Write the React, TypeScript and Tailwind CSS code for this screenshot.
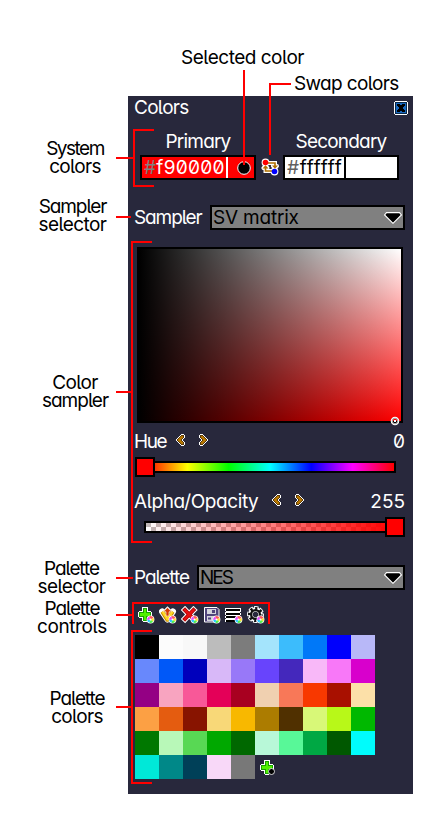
import type { ReactNode } from "react";

const palette = [
  "#000000", "#fcfcfc", "#f8f8f8", "#bcbcbc", "#7c7c7c", "#a4e4fc", "#3cbcfc", "#0078f8", "#0000fc", "#b8b8f8",
  "#6888fc", "#0058f8", "#0000bc", "#d8b8f8", "#9878f8", "#6844fc", "#4428bc", "#f8b8f8", "#f878f8", "#d800cc",
  "#940084", "#f8a4c0", "#f85898", "#e40058", "#a80020", "#f0d0b0", "#f87858", "#f83800", "#a81000", "#fce0a8",
  "#fca044", "#e45c10", "#881400", "#f8d878", "#f8b800", "#ac7c00", "#503000", "#d8f878", "#b8f818", "#00b800",
  "#007800", "#b8f8b8", "#58d854", "#00a800", "#006800", "#b8f8d8", "#58f898", "#00a844", "#005800", "#00fcfc",
  "#00e8d8", "#008888", "#004058", "#f8d8f8", "#787878",
];

function Wheel() {
  return (
    <g>
      <circle cx="13.5" cy="13.5" r="3.9" fill="#fff" />
      <path d="M13.5 13.500L12 10.400A3.300 3.300 0 0 1 16.500 12z" fill="#ff5a5a" />
      <path d="M13.5 13.500L16.500 12A3.300 3.300 0 0 1 16 15.700z" fill="#ffe030" />
      <path d="M13.5 13.500L16 15.700A3.300 3.300 0 0 1 12.500 16.700z" fill="#50f050" />
      <path d="M13.5 13.500L12.500 16.700A3.300 3.300 0 0 1 10.200 14z" fill="#28c8ff" />
      <path d="M13.5 13.500L10.200 14A3.300 3.300 0 0 1 12 10.400z" fill="#e048ff" />
      <circle cx="13.5" cy="13.5" r="1" fill="#fff" />
    </g>
  );
}

function Icon({ children, className = "" }: { children: ReactNode; className?: string }) {
  return (
    <svg viewBox="0 0 18 18" width="18" height="18" fill="none" className={className}>
      {children}
    </svg>
  );
}

function Plus() {
  return (
    <g shapeRendering="crispEdges">
      <path d="M5 1h6v1h0v3h3v1h1v5h-1v1h-3v3h-1v1h-4v-1h-1v-3h-3v-1h-1v-5h1v-1h3z" fill="#fff" />
      <path d="M6 2h4v4h4v5h-4v4h-4v-4h-4v-5h4z" fill="#18a000" />
      <path d="M7 3h2v4h4v3h-4v4h-2v-4h-4v-3h4z" fill="#50f000" />
    </g>
  );
}

function ChevronLeft() {
  return (
    <svg viewBox="0 0 10 12" width="10" height="12" shapeRendering="crispEdges">
      <path d="M5 0h3v1h1v3h-1v1h-1v2h1v1h1v3h-1v1h-3v-1h-1v-1h-1v-1h-1v-1h-1v-1h-1v-2h1v-1h1v-1h1v-1h1v-1h1z" fill="#fff" />
      <path d="M5 1h3v3h-1v1h-1v2h1v1h1v3h-3v-1h-1v-1h-1v-1h-1v-1h-1v-2h1v-1h1v-1h1v-1h1z" fill="#5a3a08" />
      <path d="M5 2h2v2h-1v1h-1v2h1v1h1v2h-2v-1h-1v-1h-1v-1h-1v-2h1v-1h1v-1h1z" fill="#b87800" />
    </svg>
  );
}

function Steppers() {
  return (
    <div className="mb-[4px] flex gap-[12px]">
      <ChevronLeft />
      <div className="-scale-x-100"><ChevronLeft /></div>
    </div>
  );
}

function Select({ children }: { children: ReactNode }) {
  return (
    <div className="flex h-[25px] flex-1 items-center justify-between border-2 border-black bg-[#808080] px-[1px] text-black">
      {children}
      <svg viewBox="0 0 18 12" width="18" height="12">
        <path d="M2.500 .6h13L17.400 3 9 11.300.6 3z" fill="#000" stroke="#fff" strokeWidth="1.100" />
      </svg>
    </div>
  );
}

function Label({ children, className }: { children: ReactNode; className: string }) {
  return <div className={`flex h-[36px] flex-col items-center leading-[18px] ${className}`}>{children}</div>;
}

function Annotations() {
  return (
    <svg viewBox="0 0 445 826" width="445" height="826" shapeRendering="crispEdges" className="pointer-events-none absolute top-0 left-0" fill="none" stroke="#ff0000" strokeWidth="2">
      <path d="M244 70V165M291 84H270V155" />
      <path d="M154 130H134V186H154M116 158H134" />
      <path d="M116 217H131" />
      <path d="M152 242H132V542H152M116 392H132" />
      <path d="M116 578H133" />
      <path d="M133 624V603H269V624M116 615H133" />
      <path d="M152 631H132V783H152M116 707H132" />
    </svg>
  );
}

function Panel() {
  return (
    <div className="h-[698px] w-[285px] bg-[#28283c] text-white">
      <div className="flex h-[23px] items-center justify-between pr-[5px] pl-[6px]">
        <span className="tracking-[-0.7px]">Colors</span>
        <svg viewBox="0 0 14 14" width="14" height="14" shapeRendering="crispEdges">
          <path d="M1 0h12v1h1v12h-1v1h-12v-1h-1v-12h1z" fill="#fff" />
          <path d="M1 1h12v12h-12z" fill="#082848" />
          <path d="M2 2h10v10h-10z" fill="#1868c0" />
          <path d="M3 3h3v1h2v-1h3v2h-1v1h-1v2h1v1h1v2h-3v-1h-2v1h-3v-2h1v-1h1v-2h-1v-1h-1z" fill="#000" />
        </svg>
      </div>

      <div className="mt-[13px] flex h-[48px] items-end pl-[12px]">
        <div className="flex w-[116px] flex-col items-center">
          <span className="-mt-[1px] h-[27px] leading-[27px] tracking-[-0.8px]">Primary</span>
          <div className="flex h-[25px] w-full items-center border-2 border-black bg-[#ff0000] pl-[2px]">
            <span className="w-[82px] tracking-[0.3px]"><span className="text-[#808080]">#</span>f90000</span>
            <div className="h-[21px] w-[2px] bg-white" />
            <svg viewBox="0 0 14 14" width="14" height="14" className="ml-[9px]">
              <circle cx="7" cy="7" r="6.3" fill="#000" stroke="#fff" />
            </svg>
          </div>
        </div>
        <Icon className="mr-[4px] mb-[4px] ml-[5px] shrink-0">
          <g stroke="#fff" strokeWidth="4">
            <path d="M7 5h7v3M11 13H4.500v-3" />
            <path d="M12 8h4l-2 2zM2.500 10h4l-2-2z" strokeLinejoin="round" />
          </g>
          <circle cx="4.500" cy="4.500" r="3.900" fill="#fff" />
          <circle cx="13.500" cy="13.500" r="3.900" fill="#fff" />
          <path d="M7 5h7v3M11 13H4.500v-3" stroke="#b07000" strokeWidth="1.600" />
          <path d="M11 7.500h6l-3 3.200zM1.500 10.500h6l-3-3.200z" fill="#b07000" />
          <circle cx="4.500" cy="4.500" r="2.800" fill="#ff0000" />
          <circle cx="13.500" cy="13.500" r="2.800" fill="#0000ff" />
        </Icon>
        <div className="flex w-[116px] flex-col items-center">
          <span className="-mt-[1px] h-[27px] leading-[27px] tracking-[-0.8px]">Secondary</span>
          <div className="flex h-[25px] w-full items-center border-2 border-black bg-white pl-[2px] text-black">
            <span className="w-[57px] tracking-[0.7px]"><span className="text-[#606060]">#</span>ffffff</span>
            <div className="h-[21px] w-[2px] bg-black" />
          </div>
        </div>
      </div>

      <div className="mt-[25px] flex h-[25px] items-center pr-[8px] pl-[6px]">
        <span className="w-[76px] tracking-[-1.1px]">Sampler</span>
        <Select><span className="tracking-[-0.2px]">SV matrix</span></Select>
      </div>

      <div className="relative mt-[17px] ml-[9px] h-[176px] w-[266px] border-2 border-black bg-[linear-gradient(to_right,#000,transparent),linear-gradient(to_bottom,#fff,#f00)]">
        <svg viewBox="0 0 10 10" width="10" height="10" className="absolute right-[1px] -bottom-[5px]">
          <circle cx="5" cy="5" r="3.300" fill="none" stroke="#fff" strokeWidth="2" />
          <circle cx="5" cy="5" r="2.800" fill="none" stroke="#777" strokeWidth=".7" />
          <rect x="4" y="4" width="2" height="2" fill="#fff" />
        </svg>
      </div>

      <div className="mt-[7px] flex h-[24px] items-center pr-[8px] pl-[6px]">
        <span className="w-[42px] tracking-[-1.4px]">Hue</span>
        <Steppers />
        <span className="ml-auto">0</span>
      </div>
      <div className="relative mt-[7px] ml-[16px] h-[12px] w-[252px] border-2 border-black bg-[linear-gradient(to_right,#f00,#ff0,#0f0,#0ff,#00f,#f0f,#f00)]">
        <div className="absolute -top-[6px] -left-[11px] h-[20px] w-[20px] border-2 border-black bg-[#ff0000]" />
      </div>
      <div className="mt-[17px] flex h-[24px] items-center pr-[8px] pl-[6px]">
        <span className="w-[138px] tracking-[-0.4px]">Alpha/Opacity</span>
        <Steppers />
        <span className="ml-auto">255</span>
      </div>
      <div className="relative mt-[7px] ml-[16px] h-[12px] w-[252px] border-2 border-black bg-[linear-gradient(to_right,transparent,#f00),repeating-conic-gradient(#fff_0_25%,#c0b8b8_0_50%)] bg-[length:100%_100%,10px_8px]">
        <div className="absolute -top-[6px] -right-[11px] h-[20px] w-[20px] border-2 border-black bg-[#ff0000]" />
      </div>

      <div className="mt-[32px] flex h-[25px] items-center pr-[8px] pl-[6px]">
        <span className="w-[63px] tracking-[-1.1px]">Palette</span>
        <Select><span className="tracking-[-2px]">NES</span></Select>
      </div>

      <div className="mt-[16px] ml-[9px] flex gap-[4px]">
        <Icon><Plus /><Wheel /></Icon>
        <Icon>
          <path d="M3 5.500L8.500 13.500L14 5.500" stroke="#fff" strokeWidth="6" strokeLinejoin="round" strokeLinecap="round" />
          <path d="M8.500 0.200L13.500 5.200v2h-10v-2z" fill="#fff" />
          <path d="M3.500 5.500L8.500 13.500L13.500 5.500" stroke="#c88a00" strokeWidth="4.500" strokeLinejoin="round" />
          <path d="M3.500 5.500L8.500 13.500L13.500 5.500" stroke="#ffd820" strokeWidth="2.400" strokeLinejoin="round" />
          <path d="M8.500 1.500L12.500 5.800H10V10H7V5.800H4.500z" fill="#d43800" stroke="#fff" strokeWidth=".6" />
          <Wheel />
        </Icon>
        <Icon>
          <path d="M4 4L12.500 13M12.500 4L4 13" stroke="#fff" strokeWidth="6" strokeLinecap="square" />
          <path d="M4 4L12.500 13M12.500 4L4 13" stroke="#a80000" strokeWidth="4" strokeLinecap="square" />
          <path d="M4 4L12.500 13M12.500 4L4 13" stroke="#e81010" strokeWidth="2.500" strokeLinecap="square" />
          <Wheel />
        </Icon>
        <Icon>
          <path d="M1.500 1.500h12.500l2 2v12.500h-14.500z" fill="#50447c" stroke="#fff" strokeWidth="1" strokeLinejoin="round" />
          <path d="M4 3h9v5h-9zM4 10h8v5h-8z" fill="#d4d4dc" />
          <path d="M9 4h3v3h-3zM5 11.500h3v2h-3z" fill="#50447c" />
          <Wheel />
        </Icon>
        <Icon>
          <path d="M0 2h16v4h-1v1h1v2h-1v1h1v6h-16v-3h1v-1h-1v-2h1v-1h-1v-3h1v-1h-1z" fill="#fff" shapeRendering="crispEdges" />
          <path d="M1 3h14v2h-14zM1 6.500h14v2h-14zM1 10h14v2h-14zM1 13.500h14v2h-14z" fill="#000" shapeRendering="crispEdges" />
          <Wheel />
        </Icon>
        <Icon>
          <circle cx="8.500" cy="8.500" r="6.500" stroke="#fff" strokeWidth="4" strokeDasharray="3.900 1.205" strokeDashoffset="1.950" />
          <circle cx="8.500" cy="8.500" r="5" stroke="#fff" strokeWidth="4.500" />
          <circle cx="8.500" cy="8.500" r="6.200" stroke="#111" strokeWidth="2.800" strokeDasharray="2.200 2.670" strokeDashoffset="1.100" />
          <circle cx="8.500" cy="8.500" r="4.400" stroke="#111" strokeWidth="2.300" />
          <Wheel />
        </Icon>
      </div>

      <div className="mt-[11px] ml-[7px] grid w-[240px] grid-cols-10">
        {palette.map((color, i) => (
          <div key={i} className="h-[24px]" style={{ backgroundColor: color }} />
        ))}
        <div className="h-[24px] pt-[4px] pl-[4px]">
          <Icon>
            <Plus />
            <circle cx="12.500" cy="12.500" r="3" fill="#000" stroke="#fff" strokeWidth=".8" />
          </Icon>
        </div>
      </div>
    </div>
  );
}

export default function App() {
  return (
    <div className="relative h-[826px] w-[445px] overflow-hidden bg-white font-['Inter',sans-serif] text-[19px] leading-[18px] whitespace-nowrap text-black [font-feature-settings:'cv11','cv05','zero','calt'_0]">
      <div className="flex h-[96px] flex-col pt-[49px]">
        <span className="ml-[181px] h-[26px] tracking-[-0.5px]">Selected color</span>
        <span className="ml-[294px] tracking-[-0.65px]">Swap colors</span>
      </div>
      <div className="flex">
        <div className="w-[128px] pt-[44px]">
          <Label className="mr-[-22px]"><span className="tracking-[-1.500px]">System</span><span className="tracking-[-0.700px]">colors</span></Label>
          <Label className="mt-[22px] mr-[-17px]"><span className="tracking-[-1.100px]">Sampler</span><span className="tracking-[-0.600px]">selector</span></Label>
          <Label className="mt-[140px] mr-[-22px]"><span className="tracking-[-0.700px]">Color</span><span className="tracking-[-1px]">sampler</span></Label>
          <Label className="mt-[150px] mr-[-15px]"><span className="tracking-[-1.100px]">Palette</span><span className="tracking-[-0.600px]">selector</span></Label>
          <Label className="mt-[4px] mr-[-16px]"><span className="tracking-[-1.100px]">Palette</span><span className="tracking-[-0.400px]">controls</span></Label>
          <Label className="mt-[54px] mr-[-26px]"><span className="tracking-[-1.100px]">Palette</span><span className="tracking-[-0.700px]">colors</span></Label>
        </div>
        <Panel />
      </div>
      <Annotations />
    </div>
  );
}
